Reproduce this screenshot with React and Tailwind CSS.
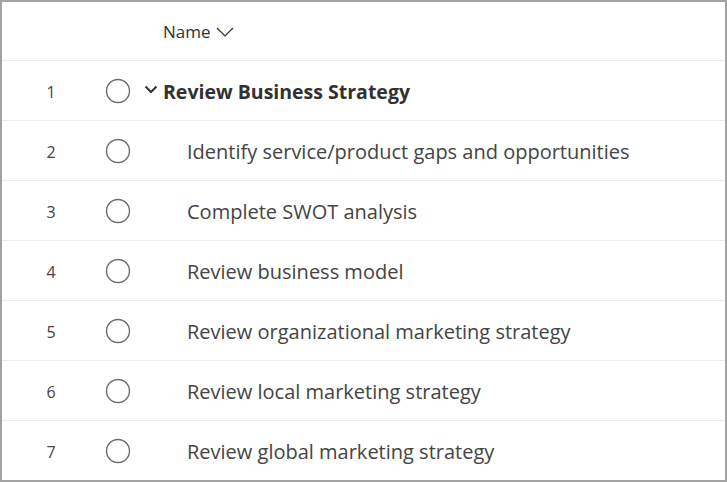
import React from "react";

const tasks = [
    { id: 1, name: "Review Business Strategy", parent: true },
    { id: 2, name: "Identify service/product gaps and opportunities" },
    { id: 3, name: "Complete SWOT analysis" },
    { id: 4, name: "Review business model" },
    { id: 5, name: "Review organizational marketing strategy" },
    { id: 6, name: "Review local marketing strategy" },
    { id: 7, name: "Review global marketing strategy" },
];

function Circle() {
    return (
        <svg width="26" height="26" viewBox="0 0 26 26" className="shrink-0">
            <circle cx="13" cy="13" r="11.5" fill="none" stroke="#6b6b6b" strokeWidth="1.4" />
        </svg>
    );
}

export default function App() {
    return (
        <div
            className="w-[727px] h-[482px] border-2 border-[#a3a3a3] bg-white text-[#3b3b3b] overflow-hidden"
            style={{ fontFamily: '"Open Sans", "Noto Sans", sans-serif' }}
        >
            <div className="h-[58px] flex items-center pl-[161px] pt-[2px]">
                <span className="text-[17px] text-[#323130]">Name</span>
                <svg width="18" height="10" viewBox="0 0 18 10" className="ml-[5px]">
                    <path d="M1 1 L9 9 L17 1" fill="none" stroke="#323130" strokeWidth="1.2" />
                </svg>
            </div>

            {tasks.map((task) => (
                <div key={task.id} className="h-[60px] border-t border-[#ececec] flex items-center">
                    <div className="w-[98px] text-center text-[16px] text-[#444] pt-[2px]">{task.id}</div>
                    <div className="pl-[5px]">
                        <Circle />
                    </div>
                    {task.parent ? (
                        <div className="flex items-center pt-[2px]">
                            <svg width="14" height="9" viewBox="0 0 14 9" className="ml-[13px] mr-[5px] mb-[4px]">
                                <path d="M1.5 1.5 L7 7 L12.5 1.5" fill="none" stroke="#323130" strokeWidth="2" />
                            </svg>
                            <span className="text-[19.5px] font-bold text-[#323130]">{task.name}</span>
                        </div>
                    ) : (
                        <span className="ml-[56px] pt-[2px] text-[20px] text-[#444]">{task.name}</span>
                    )}
                </div>
            ))}
        </div>
    );
}
